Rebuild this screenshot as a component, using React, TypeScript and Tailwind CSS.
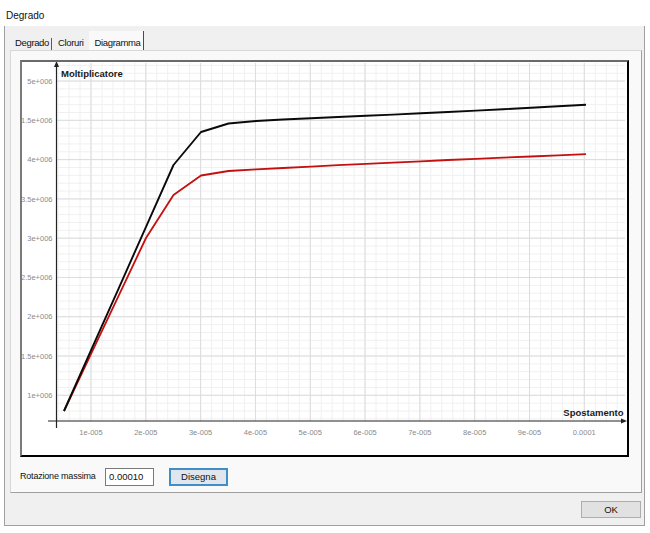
import React from "react";

// chart geometry, in page pixels (the svg viewBox is offset so these map 1:1)
const X0 = 36.2;
const XS = 54.81;
const xv = (v: number) => X0 + XS * v;
const Y0 = 395.3;
const YS = 39.28;
const yv = (i: number) => Y0 - YS * i;

const GRID = { left: 56, right: 625, top: 63, bottom: 421 };

const yLabels = ["1e+006", "1.5e+006", "2e+006", "2.5e+006", "3e+006", "3.5e+006", "4e+006", "1.5e+006", "5e+006"];
const xLabels = ["1e-005", "2e-005", "3e-005", "4e-005", "5e-005", "6e-005", "7e-005", "8e-005", "9e-005", "0.0001"];

const blackCurve: [number, number][] = [
  [64, 411], [91.3, 349.7], [118.7, 288.3], [146, 226.8], [173.5, 165], [201, 132],
  [228.5, 123.5], [256, 121], [283, 119.5], [311, 118.2], [338, 117], [366, 115.8],
  [393, 114.6], [421, 113.3], [448, 112], [476, 110.6], [503, 109.2], [531, 107.8],
  [558, 106.2], [586, 104.8],
];

const redCurve: [number, number][] = [
  [64, 411], [91.3, 353.4], [118.7, 295.7], [146, 238], [173.5, 195], [201, 175.5],
  [228.5, 171], [256, 169.4], [283, 168], [311, 166.6], [338, 165.2], [366, 163.9],
  [393, 162.6], [421, 161.3], [448, 160], [476, 158.8], [503, 157.6], [531, 156.5],
  [558, 155.3], [586, 154.2],
];

const pts = (c: [number, number][]) => c.map(([x, y]) => `${x},${y}`).join(" ");

function Chart() {
  const minorX: number[] = [];
  for (let v = 0.2; v < 11; v += 0.2) {
    const x = xv(v);
    if (x > GRID.left + 1 && x < GRID.right) minorX.push(x);
  }
  const minorY: number[] = [];
  for (let i = -1; i < 9.2; i += 0.2) {
    const y = yv(i);
    if (y > GRID.top && y < GRID.bottom) minorY.push(y);
  }

  return (
    <svg width={605} height={393} viewBox="22 62 605 393" className="block">
      {/* minor grid */}
      {minorX.map((x, i) => (
        <line key={`mx${i}`} x1={x} x2={x} y1={GRID.top} y2={GRID.bottom} stroke="#f0f0f0" strokeWidth={1} />
      ))}
      {minorY.map((y, i) => (
        <line key={`my${i}`} x1={GRID.left} x2={GRID.right} y1={y} y2={y} stroke="#f0f0f0" strokeWidth={1} />
      ))}
      {/* major grid */}
      {xLabels.map((_, i) => (
        <line key={`Mx${i}`} x1={xv(i + 1)} x2={xv(i + 1)} y1={GRID.top} y2={GRID.bottom} stroke="#dcdcdc" strokeWidth={1} />
      ))}
      {yLabels.map((_, i) => (
        <line key={`My${i}`} x1={GRID.left} x2={GRID.right} y1={yv(i)} y2={yv(i)} stroke="#dcdcdc" strokeWidth={1} />
      ))}

      {/* axes */}
      <line x1={56.5} x2={56.5} y1={66} y2={428} stroke="#222" strokeWidth={1.2} />
      <polygon points="56.5,61 54,67 59,67" fill="#222" />
      <line x1={48} x2={622} y1={421} y2={421} stroke="#222" strokeWidth={1.2} />
      <polygon points="627,421 621,418.5 621,423.5" fill="#222" />

      {/* tick labels */}
      <g fontFamily="'Liberation Sans', Arial, sans-serif" fontSize={7.5} fill="#8a8a8a">
        {yLabels.map((t, i) => (
          <text key={`yl${i}`} x={52.5} y={yv(i) + 2.7} textAnchor="end">{t}</text>
        ))}
        {xLabels.map((t, i) => (
          <text key={`xl${i}`} x={xv(i + 1)} y={435.3} textAnchor="middle">{t}</text>
        ))}
      </g>

      {/* axis titles */}
      <g fontFamily="'Liberation Sans', Arial, sans-serif" fontSize={9.5} fontWeight={700} fill="#1a1a1a">
        <text x={61} y={76.6}>Moltiplicatore</text>
        <text x={623.5} y={416.3} textAnchor="end">Spostamento</text>
      </g>

      {/* curves */}
      <polyline points={pts(redCurve)} fill="none" stroke="#c41010" strokeWidth={1.8} strokeLinejoin="round" />
      <polyline points={pts(blackCurve)} fill="none" stroke="#0a0a0a" strokeWidth={1.9} strokeLinejoin="round" />
    </svg>
  );
}

export default function App() {
  return (
    <div className="w-[650px] h-[533px] bg-white text-black font-['Liberation_Sans',Arial,sans-serif] overflow-hidden whitespace-nowrap">
      {/* window title */}
      <div className="h-[26px] pl-[6px] pt-[11px] text-[10px] leading-[10px] text-[#111]">Degrado</div>

      {/* dialog frame */}
      <div className="ml-[4px] w-[641px] h-[500px] bg-[#f0f0f0] border-x border-b border-[#a0a0a0] flex flex-col">
        {/* tab strip */}
        <div className="h-[24px] flex items-end pl-[10px] text-[9.5px] tracking-[-0.35px] text-[#111]">
          <span className="h-[14px] leading-[14px]">Degrado</span>
          <div className="ml-[2px] w-px h-[12px] bg-[#5a5a5a]" />
          <span className="ml-[6px] h-[14px] leading-[14px]">Cloruri</span>
          <div className="ml-[5px] w-[55px] h-[19px] bg-[#f9f9f9] border-r border-[#4a4a4a] flex items-end pl-[6px]">
            <span className="h-[14px] leading-[14px]">Diagramma</span>
          </div>
        </div>

        {/* tab page */}
        <div className="ml-[5px] w-[632px] h-[443px] bg-[#f9f9f9] border border-[#d8d8d8] border-r-[#a0a0a0] border-b-[#a0a0a0] flex flex-col">
          <div className="ml-[9px] mt-[9px] w-[609px] h-[397px] bg-white border-2 border-l-[#7a7a7a] border-t-[#6a6a6a] border-r-black border-b-black">
            <Chart />
          </div>

          <div className="ml-[9px] mt-[11px] h-[18px] flex items-center text-[9px] tracking-[-0.2px] text-[#111]">
            <span className="w-[85px]">Rotazione massima</span>
            <div className="w-[49px] h-[18px] bg-white border border-[#7a7a7a] pl-[3px] leading-[16px] text-[9.5px] tracking-normal">0.00010</div>
            <button className="ml-[15px] w-[59px] h-[18px] bg-[#e1e6ec] border-2 border-[#3f8ec6] leading-[14px] text-[9.5px] tracking-normal">
              Disegna
            </button>
          </div>
        </div>

        {/* bottom buttons */}
        <div className="flex justify-end pr-[3px] pt-[8px]">
          <button className="w-[60px] h-[17px] bg-[#e1e1e1] border border-[#adadad] text-[9.5px] leading-[15px] text-[#111]">
            OK
          </button>
        </div>
      </div>
    </div>
  );
}
